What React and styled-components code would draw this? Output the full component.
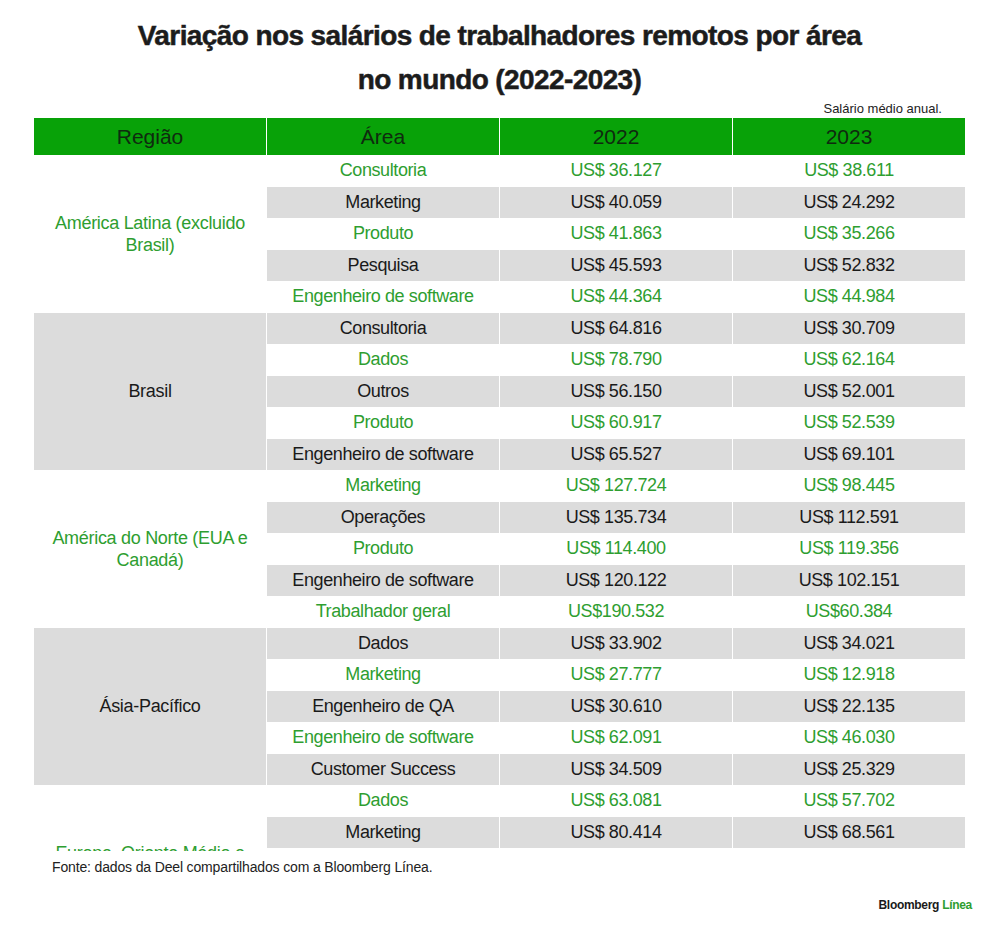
import React from 'react';
import styled, { createGlobalStyle } from 'styled-components';

const GlobalStyle = createGlobalStyle`
  body {
    margin: 0;
    background: #fff;
    font-family: "Liberation Sans", Arial, sans-serif;
    color: #1a1a1a;
  }
`;

const green = '#2e9e30';
const gray = '#dcdcdc';

const Page = styled.div`
  width: 1000px;
  height: 934px;
  padding: 14px 35px 0 34px;
  box-sizing: border-box;
  overflow: hidden;
`;

const Title = styled.h1`
  margin: 0;
  font-size: 28px;
  font-weight: 700;
  line-height: 44px;
  letter-spacing: -0.6px;
  text-align: center;
  color: #1c1c1c;
  -webkit-text-stroke: 0.5px #1c1c1c;
`;

const Note = styled.div`
  margin-top: -1px;
  padding-right: 23px;
  font-size: 13px;
  line-height: 16px;
  text-align: right;
  color: #222;
`;

const Grid = styled.div`
  display: grid;
  grid-template-columns: repeat(4, 232px);
  column-gap: 1px;
`;

const Head = styled(Grid)`
  margin-top: 1px;
  height: 37px;
`;

const HeadCell = styled.div`
  display: flex;
  align-items: center;
  justify-content: center;
  background: #08a208;
  color: #0f2a0f;
  font-size: 21px;
`;

const Body = styled(Grid)`
  grid-auto-rows: 31.5px;
  height: 696px;
  overflow: hidden;
`;

const Cell = styled.div`
  display: flex;
  align-items: center;
  justify-content: center;
  background: ${p => (p.$shaded ? gray : 'transparent')};
  color: ${p => (p.$shaded ? '#1a1a1a' : green)};
  font-size: 18px;
  letter-spacing: -0.4px;
  white-space: nowrap;
`;

const RegionCell = styled(Cell)`
  grid-column: 1;
  grid-row: span 5;
  padding: 0 14px;
  line-height: 22px;
  text-align: center;
  white-space: normal;
  letter-spacing: -0.3px;
`;

const Source = styled.div`
  margin-top: 7px;
  padding-left: 18px;
  font-size: 14px;
  line-height: 18px;
  letter-spacing: -0.15px;
  color: #222;
`;

const Logo = styled.div`
  margin: 22px -7px 0 0;
  text-align: right;
  font-size: 12px;
  font-weight: 700;
  line-height: 14px;
  letter-spacing: -0.3px;
  color: #1a1a1a;
  span {
    color: ${green};
  }
`;

const regions = [
  {
    name: 'América Latina (excluido Brasil)',
    rows: [
      ['Consultoria', 'US$ 36.127', 'US$ 38.611'],
      ['Marketing', 'US$ 40.059', 'US$ 24.292'],
      ['Produto', 'US$ 41.863', 'US$ 35.266'],
      ['Pesquisa', 'US$ 45.593', 'US$ 52.832'],
      ['Engenheiro de software', 'US$ 44.364', 'US$ 44.984'],
    ],
  },
  {
    name: 'Brasil',
    rows: [
      ['Consultoria', 'US$ 64.816', 'US$ 30.709'],
      ['Dados', 'US$ 78.790', 'US$ 62.164'],
      ['Outros', 'US$ 56.150', 'US$ 52.001'],
      ['Produto', 'US$ 60.917', 'US$ 52.539'],
      ['Engenheiro de software', 'US$ 65.527', 'US$ 69.101'],
    ],
  },
  {
    name: 'América do Norte (EUA e Canadá)',
    rows: [
      ['Marketing', 'US$ 127.724', 'US$ 98.445'],
      ['Operações', 'US$ 135.734', 'US$ 112.591'],
      ['Produto', 'US$ 114.400', 'US$ 119.356'],
      ['Engenheiro de software', 'US$ 120.122', 'US$ 102.151'],
      ['Trabalhador geral', 'US$190.532', 'US$60.384'],
    ],
  },
  {
    name: 'Ásia-Pacífico',
    rows: [
      ['Dados', 'US$ 33.902', 'US$ 34.021'],
      ['Marketing', 'US$ 27.777', 'US$ 12.918'],
      ['Engenheiro de QA', 'US$ 30.610', 'US$ 22.135'],
      ['Engenheiro de software', 'US$ 62.091', 'US$ 46.030'],
      ['Customer Success', 'US$ 34.509', 'US$ 25.329'],
    ],
  },
  {
    name: 'Europa, Oriente Médio e África',
    rows: [
      ['Dados', 'US$ 63.081', 'US$ 57.702'],
      ['Marketing', 'US$ 80.414', 'US$ 68.561'],
    ],
  },
];

const App = () => {
  return (
    <Page>
      <GlobalStyle />
      <Title>
        Variação nos salários de trabalhadores remotos por área
        <br />
        no mundo (2022-2023)
      </Title>
      <Note>Salário médio anual.</Note>
      <Head>
        <HeadCell>Região</HeadCell>
        <HeadCell>Área</HeadCell>
        <HeadCell>2022</HeadCell>
        <HeadCell>2023</HeadCell>
      </Head>
      <Body>
        {regions.map((region, g) => (
          <React.Fragment key={region.name}>
            <RegionCell $shaded={g % 2 === 1}>{region.name}</RegionCell>
            {region.rows.map((row, i) => {
              const shaded = (g * 5 + i) % 2 === 1;
              return row.map((value, c) => (
                <Cell key={`${g}-${i}-${c}`} $shaded={shaded}>{value}</Cell>
              ));
            })}
          </React.Fragment>
        ))}
      </Body>
      <Source>Fonte: dados da Deel compartilhados com a Bloomberg Línea.</Source>
      <Logo>
        Bloomberg <span>Línea</span>
      </Logo>
    </Page>
  );
};

export default App;
